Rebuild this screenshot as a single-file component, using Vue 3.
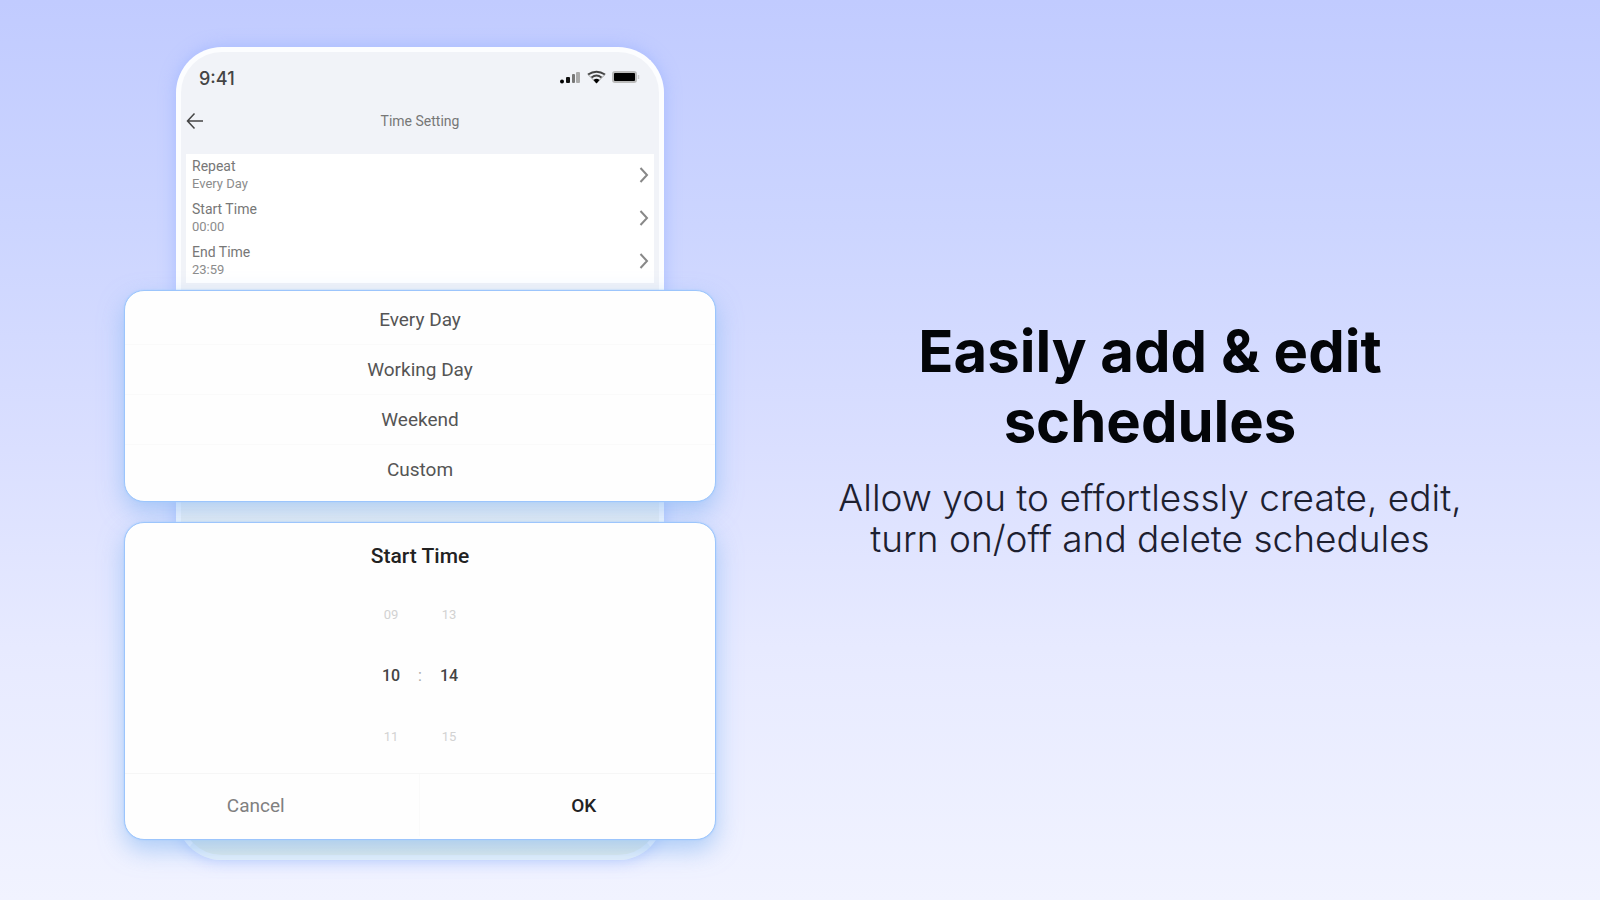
<script setup>
const settings = [
  { label: 'Repeat', value: 'Every Day' },
  { label: 'Start Time', value: '00:00' },
  { label: 'End Time', value: '23:59' },
]
const repeats = ['Every Day', 'Working Day', 'Weekend', 'Custom']
const times = [
  { hour: '09', minute: '13' },
  { hour: '10', minute: '14', current: true },
  { hour: '11', minute: '15' },
]
</script>

<template>
  <main class="page">
    <section class="demo">
      <div class="phone">
        <div class="status">
          <span class="clock">9:41</span>
          <svg class="status-icons" width="84" height="16" viewBox="0 0 84 16" aria-hidden="true">
            <circle cx="6" cy="11.5" r="2" fill="#000" />
            <rect x="10" y="7" width="4" height="6" rx="1" fill="#111" />
            <rect x="16" y="4" width="3" height="9" rx="1" fill="#777" />
            <rect x="20" y="2" width="4" height="11" rx="1" fill="#aaa" />
            <path d="M32 4.500Q40.500-1 49 4.500" fill="none" stroke="#444" stroke-width="2" />
            <path d="M32 4.500L40.500 13L49 4.500" fill="none" stroke="#999" stroke-width="1" />
            <path d="M35.500 7.500Q40.500 3.500 45.500 7.500" fill="none" stroke="#444" stroke-width="2" />
            <path d="M37.500 10Q40.500 7.500 43.500 10L40.500 13.500Z" fill="#000" />
            <rect x="56" y="1" width="25" height="12" rx="3" fill="#bbb" />
            <rect x="58" y="3" width="21" height="8" rx="1" fill="#000" />
            <path d="M82.500 5v4" stroke="#ccc" stroke-width="1.500" />
          </svg>
        </div>
        <header class="bar">
          <button class="back" type="button" aria-label="Back">
            <svg width="18" height="18" viewBox="0 0 18 18" fill="none" stroke="#444" stroke-width="1.500">
              <path d="M17 9H1.500M8.500 1.500L1.500 9L8.500 16.500" />
            </svg>
          </button>
          <h2>Time Setting</h2>
        </header>
        <ul class="settings">
          <li v-for="s in settings" :key="s.label">
            <button type="button" class="setting">
              <span class="setting-text">
                <span class="label">{{ s.label }}</span>
                <span class="value">{{ s.value }}</span>
              </span>
              <svg width="10" height="18" viewBox="0 0 10 18" fill="none" stroke="#888" stroke-width="2">
                <path d="M1.500 2L8 9L1.500 16" />
              </svg>
            </button>
          </li>
        </ul>
      </div>

      <div class="sheets">
        <ul class="card repeats">
          <li v-for="r in repeats" :key="r">
            <button type="button">{{ r }}</button>
          </li>
        </ul>

        <div class="card picker">
          <h3>Start Time</h3>
          <div class="wheel">
            <div v-for="t in times" :key="t.hour" class="time" :class="{ current: t.current }">
              <span>{{ t.hour }}</span>
              <span class="colon">{{ t.current ? ':' : '' }}</span>
              <span>{{ t.minute }}</span>
            </div>
          </div>
          <div class="actions">
            <button type="button" class="cancel">Cancel</button>
            <button type="button" class="ok">OK</button>
          </div>
        </div>
      </div>
    </section>

    <section class="copy">
      <h1>Easily add &amp; edit<br />schedules</h1>
      <p>Allow you to effortlessly create, edit,<br />turn on/off and delete schedules</p>
    </section>
  </main>
</template>

<style>
body {
  margin: 0;
}
</style>

<style scoped>
.page {
  box-sizing: border-box;
  min-height: 100vh;
  padding: 47px 100px 40px 40px;
  display: grid;
  grid-template-columns: 760fr 700fr;
  background: linear-gradient(180deg, #c1cbff 0%, #ccd5ff 25%, #dadfff 50%, #e7eaff 72%, #f1f3ff 100%);
  font-family: Roboto, "Liberation Sans", sans-serif;
  color: #555;
}

h1, h2, h3, p, ul {
  margin: 0;
  padding: 0;
}

ul {
  list-style: none;
}

button {
  margin: 0;
  padding: 0;
  border: 0;
  background: none;
  font: inherit;
  color: inherit;
}

.demo {
  display: grid;
  justify-items: center;
  align-items: start;
}

.phone,
.sheets {
  grid-area: 1 / 1;
}

.phone {
  box-sizing: border-box;
  width: 64%;
  min-width: 488px;
  align-self: stretch;
  padding: 0 5px;
  border: 5px solid #fcfdff;
  border-bottom-color: #e9f3fb;
  border-radius: 46px;
  background: linear-gradient(180deg, #f1f3f8 0, #f1f3f8 240px, #f1f3f4 440px, #e2ece8 100%);
  box-shadow: 0 0 16px rgba(140, 170, 255, 0.55);
}

.status {
  display: flex;
  align-items: center;
  justify-content: space-between;
  height: 44px;
  padding: 4px 14px 0 13px;
}

.clock {
  font-size: 18px;
  font-weight: 500;
  font-family: Inter, sans-serif;
  color: #444;
}

.bar {
  display: grid;
  grid-template-columns: 20px 1fr 20px;
  align-items: center;
  height: 42px;
  padding-bottom: 12px;
}

.back {
  display: flex;
}

.bar h2 {
  font-size: 14px;
  font-weight: 400;
  text-align: center;
  color: #777;
}

.settings {
  background: #fff;
}

.setting {
  width: 100%;
  height: 43px;
  padding: 0 5px 2px 6px;
  display: flex;
  align-items: center;
  justify-content: space-between;
  text-align: left;
  line-height: 17px;
}

.setting-text {
  display: flex;
  flex-direction: column;
}

.label {
  font-size: 14px;
  color: #777;
}

.value {
  font-size: 13px;
  color: #8c8c8c;
}

.sheets {
  width: 78%;
  min-width: 590px;
  margin-top: 243px;
  padding-bottom: 18px;
  display: grid;
  gap: 20px;
}

.card {
  border: 1px solid #9cc5fc;
  border-radius: 20px;
  background: #fefefe;
  box-shadow: 0 0 2px #a5ccff, 0 10px 24px rgba(130, 180, 242, 0.6);
}

.repeats {
  padding: 4px 0 7px;
  font-size: 19px;
}

.repeats li + li {
  border-top: 1px solid #fafafa;
}

.repeats button {
  width: 100%;
  height: 49px;
}

.picker h3 {
  line-height: 66px;
  font-size: 21px;
  font-weight: 500;
  text-align: center;
  color: #222;
}

.wheel {
  height: 172px;
  padding-bottom: 12px;
  display: grid;
  align-content: center;
  justify-content: center;
}

.time {
  display: grid;
  grid-template-columns: 40px 18px 40px;
  align-items: center;
  height: 61px;
  text-align: center;
  font-size: 13px;
  color: #d2d2d2;
}

.time.current {
  font-size: 16px;
  font-weight: 500;
  color: #444;
}

.time .colon {
  font-weight: 400;
  color: #aaa;
}

.actions {
  display: grid;
  grid-template-columns: 1fr 1fr;
  height: 62px;
  padding-bottom: 3px;
  border-top: 1px solid #f6f6f6;
  font-size: 19px;
}

.cancel {
  padding-right: 32px;
  border-right: 1px solid #fafafa;
  color: #808080;
}

.ok {
  padding-left: 32px;
  font-weight: 500;
  color: #222;
}

.copy {
  align-self: center;
  padding-bottom: 32px;
  text-align: center;
  font-family: Inter, "Liberation Sans", sans-serif;
  font-variant-ligatures: none;
  white-space: nowrap;
}

.copy h1 {
  font-size: 58px;
  font-weight: 700;
  line-height: 70px;
  color: #030508;
}

.copy p {
  margin-top: 21px;
  font-size: 37px;
  font-weight: 300;
  line-height: 41px;
  color: #1d2030;
}
</style>
